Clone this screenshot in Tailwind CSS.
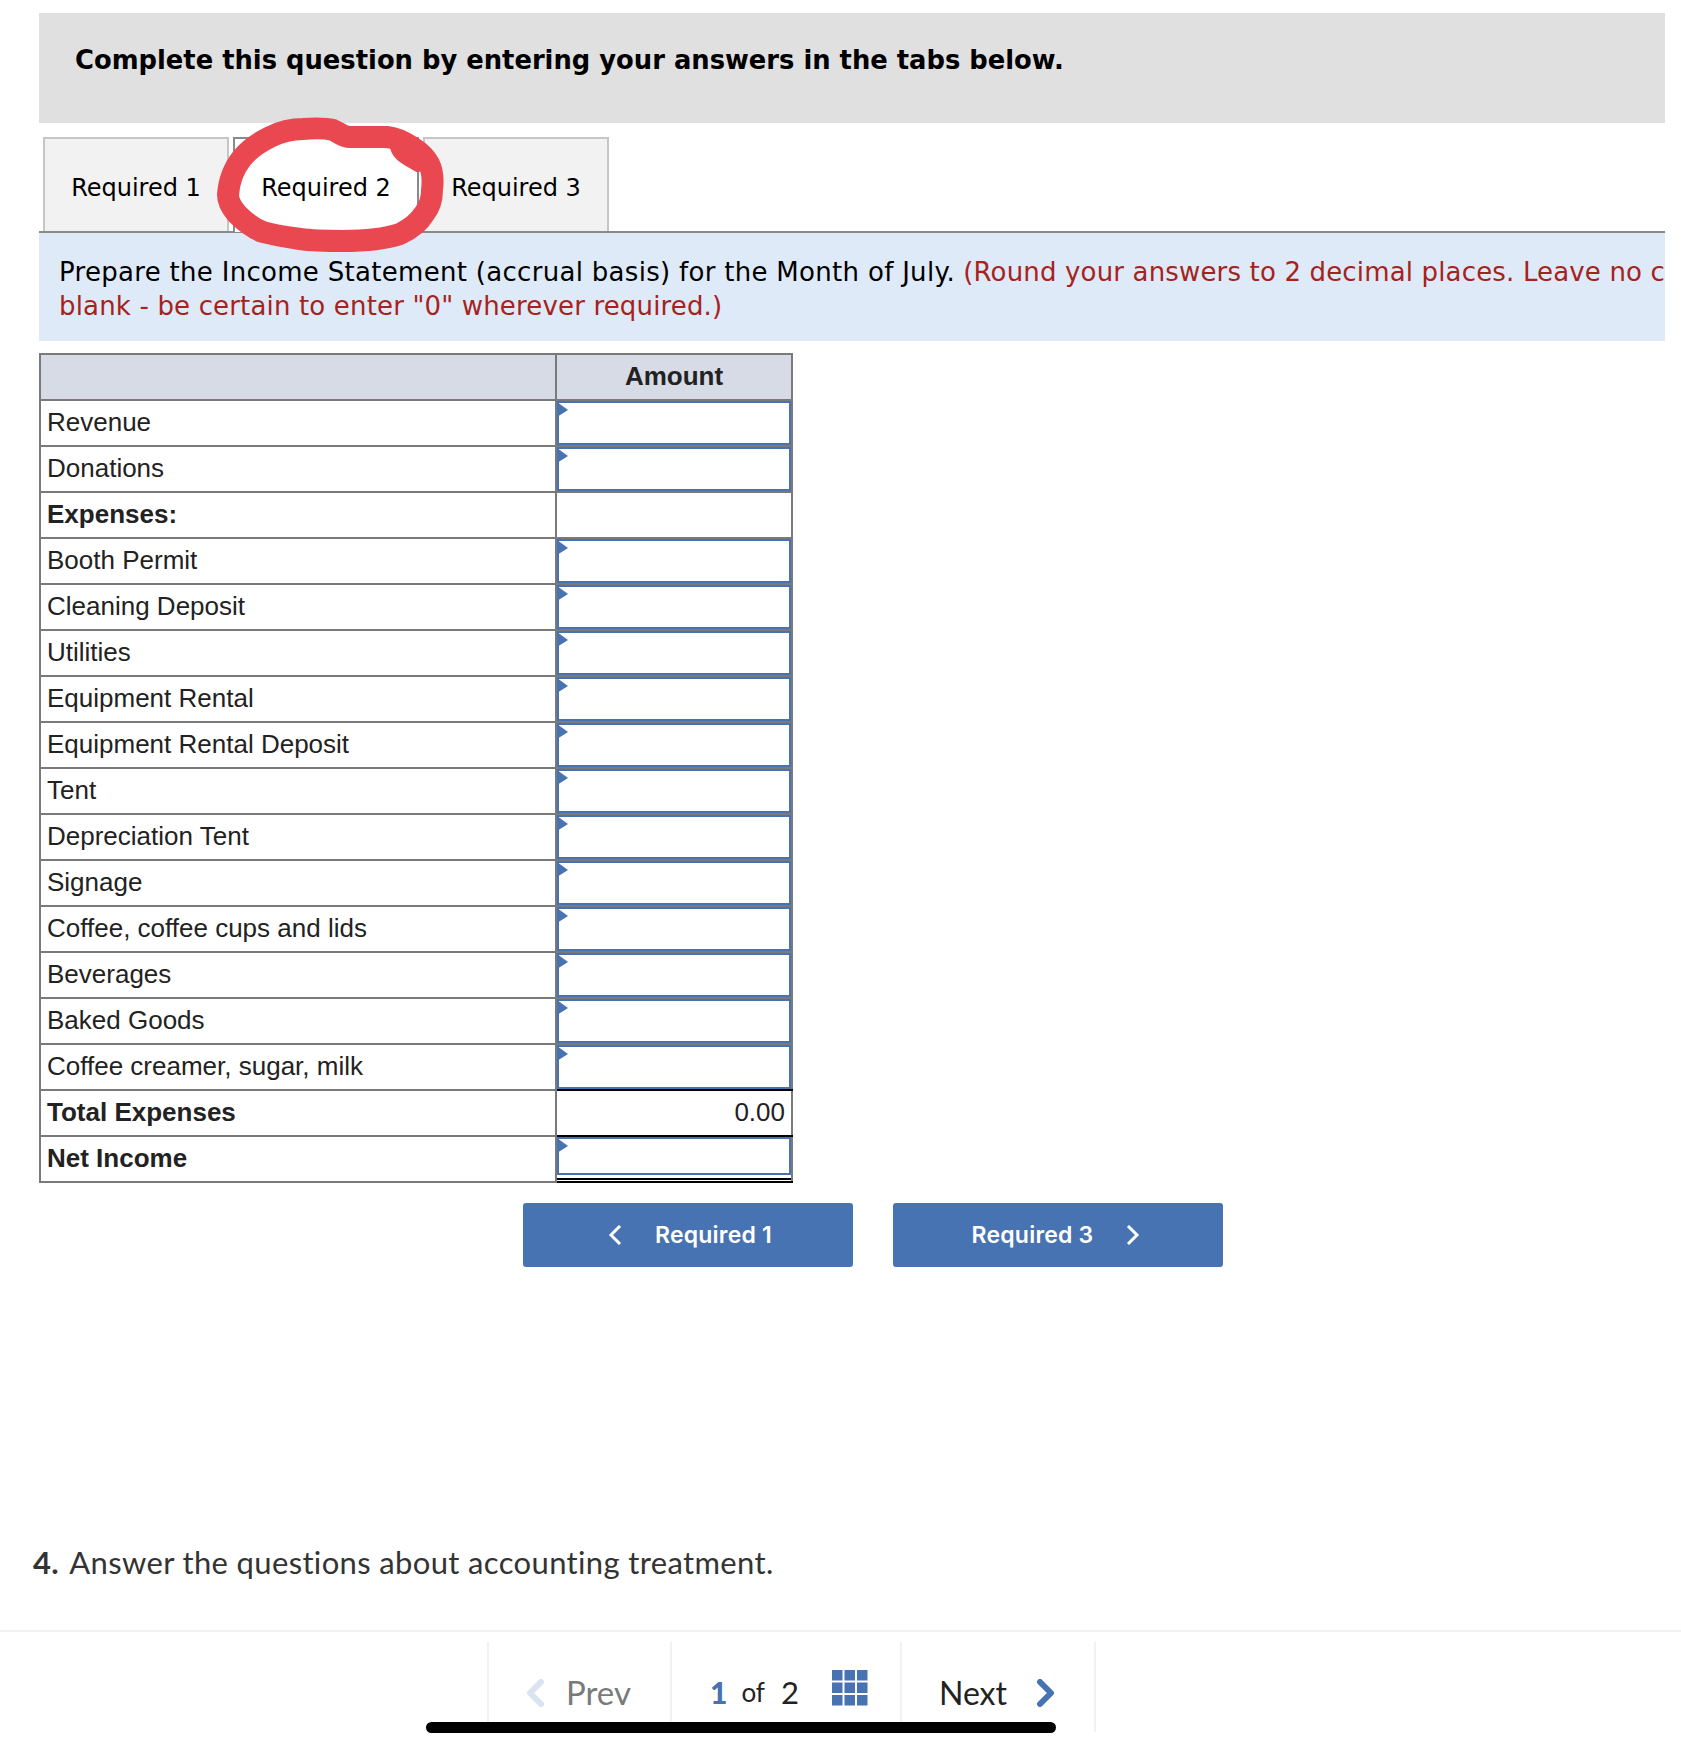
<!DOCTYPE html>
<html>
<head>
<meta charset="utf-8">
<script src="https://cdn.jsdelivr.net/npm/@tailwindcss/browser@4"></script>
</head>
<body class="bg-white">
<div class="relative w-[1681px] h-[1748px] overflow-hidden bg-white">
  <div class="pt-[13px] pl-[39px] w-[1665px]">
    <div class="h-[110px] bg-[#e0e0e0] pl-[36px] pt-[31px] font-['DejaVu_Sans',sans-serif] font-bold text-[25.8px] leading-[32px] text-black">Complete this question by entering your answers in the tabs below.</div>
    <div class="flex h-[95px] mt-[14px] pl-[4px] gap-[4px] font-['DejaVu_Sans',sans-serif] text-[24px] text-black">
      <div class="w-[186px] h-[94px] pt-[5px] bg-[#f2f2f2] border-2 border-b-0 border-[#c6c6c6] flex items-center justify-center">Required 1</div>
      <div class="w-[186px] h-[95px] pt-[5px] bg-white border-2 border-b-0 border-[#8a8a8a] flex items-center justify-center">Required 2</div>
      <div class="w-[186px] h-[94px] pt-[5px] bg-[#f2f2f2] border-2 border-b-0 border-[#c6c6c6] flex items-center justify-center">Required 3</div>
    </div>
    <div class="h-[110px] -mt-[1px] border-t-2 border-[#8a8a8a] bg-[#deeaf8] pl-[20px] pt-[22px] font-['DejaVu_Sans',sans-serif] text-[26px] leading-[34px] whitespace-nowrap overflow-hidden text-black">
      <span class="tracking-[0.3px]">Prepare the Income Statement (accrual basis) for the Month of July.</span> <span class="text-[#a5231c] tracking-[0.16px]">(Round your answers to 2 decimal places. Leave no cells<br>blank - be certain to enter "0" wherever required.)</span>
    </div>
    <table class="mt-[12px] w-[752px] table-fixed border-collapse font-['Liberation_Sans',sans-serif] text-[26px] text-[#222]">
      <colgroup><col class="w-[516px]"><col class="w-[236px]"></colgroup>
      <tbody>
        <tr class="h-[46px] bg-[#d6dbe6]"><td class="border-2 border-[#7a7a7a] p-0"></td><td class="border-2 border-[#7a7a7a] px-0 pt-0 pb-[2px] text-center font-bold">Amount</td></tr>
        <tr class="h-[46px]"><td class="border-2 border-[#7a7a7a] pl-[6px] pr-0 pt-0 pb-[2px]">Revenue</td><td class="border-2 border-[#7a7a7a] p-0"><div class="relative h-[44px] border-2 border-[#4873b2]"><svg class="absolute -left-[3px] -top-[2px]" width="14" height="20" viewBox="0 0 14 20"><path d="M1 1 L12 9 L1 16 Z" fill="#4873b2"/></svg></div></td></tr>
        <tr class="h-[46px]"><td class="border-2 border-[#7a7a7a] pl-[6px] pr-0 pt-0 pb-[2px]">Donations</td><td class="border-2 border-[#7a7a7a] p-0"><div class="relative h-[44px] border-2 border-[#4873b2]"><svg class="absolute -left-[3px] -top-[2px]" width="14" height="20" viewBox="0 0 14 20"><path d="M1 1 L12 9 L1 16 Z" fill="#4873b2"/></svg></div></td></tr>
        <tr class="h-[46px]"><td class="border-2 border-[#7a7a7a] pl-[6px] pr-0 pt-0 pb-[2px] font-bold">Expenses:</td><td class="border-2 border-[#7a7a7a] p-0"></td></tr>
        <tr class="h-[46px]"><td class="border-2 border-[#7a7a7a] pl-[6px] pr-0 pt-0 pb-[2px]">Booth Permit</td><td class="border-2 border-[#7a7a7a] p-0"><div class="relative h-[44px] border-2 border-[#4873b2]"><svg class="absolute -left-[3px] -top-[2px]" width="14" height="20" viewBox="0 0 14 20"><path d="M1 1 L12 9 L1 16 Z" fill="#4873b2"/></svg></div></td></tr>
        <tr class="h-[46px]"><td class="border-2 border-[#7a7a7a] pl-[6px] pr-0 pt-0 pb-[2px]">Cleaning Deposit</td><td class="border-2 border-[#7a7a7a] p-0"><div class="relative h-[44px] border-2 border-[#4873b2]"><svg class="absolute -left-[3px] -top-[2px]" width="14" height="20" viewBox="0 0 14 20"><path d="M1 1 L12 9 L1 16 Z" fill="#4873b2"/></svg></div></td></tr>
        <tr class="h-[46px]"><td class="border-2 border-[#7a7a7a] pl-[6px] pr-0 pt-0 pb-[2px]">Utilities</td><td class="border-2 border-[#7a7a7a] p-0"><div class="relative h-[44px] border-2 border-[#4873b2]"><svg class="absolute -left-[3px] -top-[2px]" width="14" height="20" viewBox="0 0 14 20"><path d="M1 1 L12 9 L1 16 Z" fill="#4873b2"/></svg></div></td></tr>
        <tr class="h-[46px]"><td class="border-2 border-[#7a7a7a] pl-[6px] pr-0 pt-0 pb-[2px]">Equipment Rental</td><td class="border-2 border-[#7a7a7a] p-0"><div class="relative h-[44px] border-2 border-[#4873b2]"><svg class="absolute -left-[3px] -top-[2px]" width="14" height="20" viewBox="0 0 14 20"><path d="M1 1 L12 9 L1 16 Z" fill="#4873b2"/></svg></div></td></tr>
        <tr class="h-[46px]"><td class="border-2 border-[#7a7a7a] pl-[6px] pr-0 pt-0 pb-[2px]">Equipment Rental Deposit</td><td class="border-2 border-[#7a7a7a] p-0"><div class="relative h-[44px] border-2 border-[#4873b2]"><svg class="absolute -left-[3px] -top-[2px]" width="14" height="20" viewBox="0 0 14 20"><path d="M1 1 L12 9 L1 16 Z" fill="#4873b2"/></svg></div></td></tr>
        <tr class="h-[46px]"><td class="border-2 border-[#7a7a7a] pl-[6px] pr-0 pt-0 pb-[2px]">Tent</td><td class="border-2 border-[#7a7a7a] p-0"><div class="relative h-[44px] border-2 border-[#4873b2]"><svg class="absolute -left-[3px] -top-[2px]" width="14" height="20" viewBox="0 0 14 20"><path d="M1 1 L12 9 L1 16 Z" fill="#4873b2"/></svg></div></td></tr>
        <tr class="h-[46px]"><td class="border-2 border-[#7a7a7a] pl-[6px] pr-0 pt-0 pb-[2px]">Depreciation Tent</td><td class="border-2 border-[#7a7a7a] p-0"><div class="relative h-[44px] border-2 border-[#4873b2]"><svg class="absolute -left-[3px] -top-[2px]" width="14" height="20" viewBox="0 0 14 20"><path d="M1 1 L12 9 L1 16 Z" fill="#4873b2"/></svg></div></td></tr>
        <tr class="h-[46px]"><td class="border-2 border-[#7a7a7a] pl-[6px] pr-0 pt-0 pb-[2px]">Signage</td><td class="border-2 border-[#7a7a7a] p-0"><div class="relative h-[44px] border-2 border-[#4873b2]"><svg class="absolute -left-[3px] -top-[2px]" width="14" height="20" viewBox="0 0 14 20"><path d="M1 1 L12 9 L1 16 Z" fill="#4873b2"/></svg></div></td></tr>
        <tr class="h-[46px]"><td class="border-2 border-[#7a7a7a] pl-[6px] pr-0 pt-0 pb-[2px]">Coffee, coffee cups and lids</td><td class="border-2 border-[#7a7a7a] p-0"><div class="relative h-[44px] border-2 border-[#4873b2]"><svg class="absolute -left-[3px] -top-[2px]" width="14" height="20" viewBox="0 0 14 20"><path d="M1 1 L12 9 L1 16 Z" fill="#4873b2"/></svg></div></td></tr>
        <tr class="h-[46px]"><td class="border-2 border-[#7a7a7a] pl-[6px] pr-0 pt-0 pb-[2px]">Beverages</td><td class="border-2 border-[#7a7a7a] p-0"><div class="relative h-[44px] border-2 border-[#4873b2]"><svg class="absolute -left-[3px] -top-[2px]" width="14" height="20" viewBox="0 0 14 20"><path d="M1 1 L12 9 L1 16 Z" fill="#4873b2"/></svg></div></td></tr>
        <tr class="h-[46px]"><td class="border-2 border-[#7a7a7a] pl-[6px] pr-0 pt-0 pb-[2px]">Baked Goods</td><td class="border-2 border-[#7a7a7a] p-0"><div class="relative h-[44px] border-2 border-[#4873b2]"><svg class="absolute -left-[3px] -top-[2px]" width="14" height="20" viewBox="0 0 14 20"><path d="M1 1 L12 9 L1 16 Z" fill="#4873b2"/></svg></div></td></tr>
        <tr class="h-[46px]"><td class="border-2 border-[#7a7a7a] pl-[6px] pr-0 pt-0 pb-[2px]">Coffee creamer, sugar, milk</td><td class="border-2 border-[#7a7a7a] border-b-black p-0"><div class="relative h-[44px] border-2 border-[#4873b2]"><svg class="absolute -left-[3px] -top-[2px]" width="14" height="20" viewBox="0 0 14 20"><path d="M1 1 L12 9 L1 16 Z" fill="#4873b2"/></svg></div></td></tr>
        <tr class="h-[46px]"><td class="border-2 border-[#7a7a7a] pl-[6px] pr-0 pt-0 pb-[2px] font-bold">Total Expenses</td><td class="border-2 border-[#7a7a7a] border-t-black border-b-black pl-0 pr-[6px] pt-0 pb-[2px] text-right">0.00</td></tr>
        <tr class="h-[46px]"><td class="border-2 border-[#7a7a7a] pl-[6px] pr-0 pt-0 pb-[2px] font-bold">Net Income</td><td class="border-2 border-[#7a7a7a] border-t-black border-b-black p-0"><div class="h-[44px]"><div class="relative h-[38px] border-2 border-[#4873b2]"><svg class="absolute -left-[3px] -top-[2px]" width="14" height="20" viewBox="0 0 14 20"><path d="M1 1 L12 9 L1 16 Z" fill="#4873b2"/></svg></div><div class="mt-[3px] h-[2px] bg-black"></div></div></td></tr>
      </tbody>
    </table>
  </div>
  <div class="flex gap-[40px] ml-[523px] mt-[20px] font-['Inter',sans-serif] font-semibold text-[23px] tracking-[0.2px] text-white">
    <div class="w-[330px] h-[64px] rounded-[3px] bg-[#4873b2] flex items-center justify-center gap-[33px] pl-[4px]">
      <svg width="14" height="20" viewBox="0 0 14 20" fill="none" stroke="white" stroke-width="3"><path d="M12 1 L3 10 L12 19"/></svg>
      <span>Required 1</span>
    </div>
    <div class="w-[330px] h-[64px] rounded-[3px] bg-[#4873b2] flex items-center justify-center gap-[33px] pr-[4px]">
      <span>Required 3</span>
      <svg width="14" height="20" viewBox="0 0 14 20" fill="none" stroke="white" stroke-width="3"><path d="M2 1 L11 10 L2 19"/></svg>
    </div>
  </div>
  <div class="mt-[275px] pl-[33px] h-[40px] font-['Lato',sans-serif] text-[31px] leading-[40px] tracking-[0.35px] text-[#333]"><span class="font-bold">4.</span><span class="ml-[3px]"> Answer the questions about accounting treatment.</span></div>
  <div class="mt-[48px] border-t-2 border-[#f2f2f2] pt-[10px]">
    <div class="ml-[487px] flex h-[90px] w-[609px] font-['Lato',sans-serif] text-[32px] text-[#222]">
      <div class="w-[183px] border-l-2 border-[#f2f2f2] flex items-center pl-[37px] gap-[21px] pt-[11px]">
        <svg width="19" height="28" viewBox="0 0 19 28" fill="none" stroke="#d9e3f2" stroke-width="6" stroke-linecap="round" stroke-linejoin="round"><path d="M15 3 L4 14 L15 25"/></svg>
        <span class="text-[#7a7a7a] text-[33px]">Prev</span>
      </div>
      <div class="w-[230px] border-l-2 border-[#f2f2f2] flex items-center pl-[38px] pt-[11px]">
        <span class="font-black text-[#4873b2] text-[30px]">1</span>
        <span class="ml-[14px] text-[26px]">of</span>
        <span class="ml-[16px] text-[31px]">2</span>
        <svg class="ml-[33px] -mt-[9px]" width="36" height="36" viewBox="0 0 36 36" fill="#4873b2"><rect x="0" y="0" width="10.500" height="10.500"/><rect x="12.500" y="0" width="10.500" height="10.500"/><rect x="25" y="0" width="10.500" height="10.500"/><rect x="0" y="12.500" width="10.500" height="10.500"/><rect x="12.500" y="12.500" width="10.500" height="10.500"/><rect x="25" y="12.500" width="10.500" height="10.500"/><rect x="0" y="25" width="10.500" height="10.500"/><rect x="12.500" y="25" width="10.500" height="10.500"/><rect x="25" y="25" width="10.500" height="10.500"/></svg>
      </div>
      <div class="w-[196px] border-x-2 border-[#f2f2f2] flex items-center pl-[37px] gap-[29px] pt-[11px]">
        <span>Next</span>
        <svg width="19" height="28" viewBox="0 0 19 28" fill="none" stroke="#4873b2" stroke-width="6" stroke-linecap="round" stroke-linejoin="round"><path d="M4 3 L15 14 L4 25"/></svg>
      </div>
    </div>
  </div>
  <div class="absolute left-[426px] top-[1722px] w-[630px] h-[11px] rounded-full bg-black"></div>
  <svg class="absolute left-[200px] top-[100px]" width="260" height="170" viewBox="0 0 260 170" fill="none" stroke="#ea4851" stroke-linejoin="round" stroke-linecap="round">
    <path stroke-width="22" d="M28 95 C29 80 34 68 42 58 C50 48 60 42 70 37 C80 32 92 29 103 29 C115 28 125 28 133 30 C140 33 143 37 150 37 L187 37 C197 38 204 42 212 47 C220 52 226 58 229 64 C233 72 233 82 232 90 C232 101 229 108 224 114 C218 124 208 130 200 134 C182 140 162 141 143 141 C128 141 114 141 100 139 C86 137 74 135 63 132 C52 128 44 121 37 114 C31 107 28 101 28 95 Z"/>
    <path stroke-width="12" d="M196 47 C198 56 208 60 218 66"/>
  </svg>
</div>
</body>
</html>
